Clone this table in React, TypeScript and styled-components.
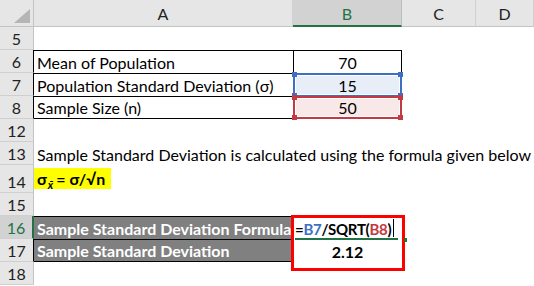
import React from 'react';
import styled, { createGlobalStyle, css } from 'styled-components';

const Global = createGlobalStyle`
  html, body { margin: 0; padding: 0; background: #fff; }
  body { font-family: Lato, "Open Sans", sans-serif; }
`;

const GREEN = '#217346';
const HEAD_BG = '#e6e6e6';
const HEAD_LINE = '#c4c4c4';

const Sheet = styled.div`
  position: relative;
  display: grid;
  grid-template-columns: 34px 259px 109px 74px 58px;
  grid-template-rows: 27px repeat(6, 23px) 28px repeat(4, 23px);
  width: 534px;
  height: 286px;
  overflow: hidden;
  font-family: Lato, "Open Sans", sans-serif;
  font-size: 16px;
  color: #000;
  background: #fff;
`;

const Corner = styled.div`
  background: ${HEAD_BG};
  border-right: 1px solid ${HEAD_LINE};
  border-bottom: 1px solid ${HEAD_LINE};
  display: flex;
  align-items: flex-end;
  justify-content: flex-end;
  padding: 0 3px 3px 0;
`;

const ColHeader = styled.div<{ $active?: boolean }>`
  background: ${(p) => (p.$active ? '#d2d2d2' : HEAD_BG)};
  color: ${(p) => (p.$active ? GREEN : '#222')};
  border-right: 1px solid ${(p) => (p.$active ? '#bcbcbc' : '#d0d0d0')};
  border-bottom: ${(p) => (p.$active ? `2px solid ${GREEN}` : `1px solid ${HEAD_LINE}`)};
  display: flex;
  align-items: center;
  justify-content: center;
  padding-top: 1px;
`;

const RowHeader = styled.div<{ $dark?: boolean; $active?: boolean }>`
  background: ${(p) => (p.$active ? '#d2d2d2' : HEAD_BG)};
  color: ${(p) => (p.$active ? GREEN : '#222')};
  border-bottom: 1px solid #cfcfcf;
  border-right: ${(p) =>
    p.$active ? `2px solid ${GREEN}` : p.$dark ? '1px solid #000' : `1px solid ${HEAD_LINE}`};
  display: flex;
  align-items: flex-end;
  justify-content: center;
  padding-bottom: 1px;
`;

type CellProps = {
  $align?: 'left' | 'center';
  $bold?: boolean;
  $fill?: string;
  $color?: string;
  $bt?: boolean;
  $bb?: boolean;
  $bl?: boolean;
  $br?: boolean;
  $tight?: boolean;
};

const Cell = styled.div<CellProps>`
  position: relative;
  display: flex;
  align-items: flex-end;
  justify-content: ${(p) => (p.$align === 'center' ? 'center' : 'flex-start')};
  padding: 0 3px 1px 3px;
  white-space: nowrap;
  overflow: visible;
  background: ${(p) => p.$fill ?? 'transparent'};
  color: ${(p) => p.$color ?? '#000'};
  font-weight: ${(p) => (p.$bold ? 700 : 400)};
  ${(p) => p.$tight && css`font-size: 15px; letter-spacing: -0.3px; padding-left: 2px;`}
  ${(p) => p.$bt && css`border-top: 1px solid #000;`}
  ${(p) => p.$bb && css`border-bottom: 1px solid #000;`}
  ${(p) => p.$bl && css`border-left: 1px solid #000;`}
  ${(p) => p.$br && css`border-right: 1px solid #000;`}
`;

const RefRange = styled.div<{ $color: string }>`
  position: absolute;
  inset: -1px -1px -1px -1px;
  border: 2px solid ${(p) => p.$color};
  box-shadow: inset 0 0 0 1px #fff;
  pointer-events: none;
`;

const Handle = styled.span<{ $color: string; $v: 'top' | 'bottom'; $h: 'left' | 'right' }>`
  position: absolute;
  width: 5px;
  height: 5px;
  background: ${(p) => p.$color};
  ${(p) => (p.$v === 'top' ? 'top: -3px;' : 'bottom: -3px;')}
  ${(p) => (p.$h === 'left' ? 'left: -3px;' : 'right: -3px;')}
`;

const Highlight = styled.span`
  display: inline-flex;
  align-items: flex-end;
  background: #ffff00;
  height: 20px;
  margin-left: -3px;
  padding: 0 6px 1px 3px;
  font-weight: 700;
  margin-bottom: 3px;
`;

const Sub = styled.span`
  font-style: italic;
  font-size: 11px;
  position: relative;
  top: 3px;
  margin: 0 3px 0 1px;
`;

const Ref = styled.span<{ $color: string }>`
  color: ${(p) => p.$color};
`;

const Caret = styled.span`
  display: inline-block;
  width: 1px;
  height: 18px;
  background: #000;
  margin-left: 2px;
  align-self: flex-end;
  margin-bottom: 1px;
`;

const EditLine = styled.span`
  position: absolute;
  left: 2px;
  right: 4px;
  bottom: -1px;
  height: 2px;
  background: ${GREEN};
`;

const FillHandle = styled.span`
  position: absolute;
  right: -5px;
  bottom: -3px;
  width: 3px;
  height: 4px;
  background: ${GREEN};
  z-index: 3;
`;

const RedBox = styled.span`
  position: absolute;
  left: -2px;
  right: -3px;
  top: -1px;
  height: 50px;
  border: 3px solid #ff0000;
  pointer-events: none;
  z-index: 2;
`;

const BLUE = '#3d6fc4';
const RED = '#c43a43';

function Range({ color }: { color: string }) {
  return (
    <RefRange $color={color}>
      <Handle $color={color} $v="top" $h="left" />
      <Handle $color={color} $v="top" $h="right" />
      <Handle $color={color} $v="bottom" $h="left" />
      <Handle $color={color} $v="bottom" $h="right" />
    </RefRange>
  );
}

function EmptyCells({ n }: { n: number }) {
  return (
    <>
      {Array.from({ length: n }, (_, i) => (
        <Cell key={i} />
      ))}
    </>
  );
}

export default function App() {
  return (
    <>
      <Global />
      <Sheet>
        <Corner>
          <svg width="16" height="14" viewBox="0 0 16 14">
            <polygon points="16,0 16,14 0,14" fill="#b5b5b5" />
          </svg>
        </Corner>
        <ColHeader>A</ColHeader>
        <ColHeader $active>B</ColHeader>
        <ColHeader>C</ColHeader>
        <ColHeader>D</ColHeader>

        <RowHeader>5</RowHeader>
        <EmptyCells n={4} />

        <RowHeader $dark>6</RowHeader>
        <Cell $bt>Mean of Population</Cell>
        <Cell $bt $bl $br $align="center">70</Cell>
        <EmptyCells n={2} />

        <RowHeader $dark>7</RowHeader>
        <Cell $bt>Population Standard Deviation (σ)</Cell>
        <Cell $bt $bl $br $align="center" $fill="#e8eef8">
          15
          <Range color={BLUE} />
        </Cell>
        <EmptyCells n={2} />

        <RowHeader $dark>8</RowHeader>
        <Cell $bt $bb>Sample Size (n)</Cell>
        <Cell $bt $bb $bl $br $align="center" $fill="#f9e8e8">
          50
          <Range color={RED} />
        </Cell>
        <EmptyCells n={2} />

        <RowHeader>12</RowHeader>
        <EmptyCells n={4} />

        <RowHeader>13</RowHeader>
        <Cell>Sample Standard Deviation is calculated using the formula given below</Cell>
        <EmptyCells n={3} />

        <RowHeader>14</RowHeader>
        <Cell>
          <Highlight>
            σ<Sub>x̄</Sub>= σ/√n
          </Highlight>
        </Cell>
        <EmptyCells n={3} />

        <RowHeader>15</RowHeader>
        <EmptyCells n={4} />

        <RowHeader $active>16</RowHeader>
        <Cell $bt $bold $fill="#808080" $color="#fff">Sample Standard Deviation Formula</Cell>
        <Cell $bold $tight>
          =<Ref $color={BLUE}>B7</Ref>/SQRT(<Ref $color={RED}>B8</Ref>)
          <Caret />
          <EditLine />
          <FillHandle />
          <RedBox />
        </Cell>
        <EmptyCells n={2} />

        <RowHeader $dark>17</RowHeader>
        <Cell $bt $bb $bold $fill="#808080" $color="#fff">Sample Standard Deviation</Cell>
        <Cell $bold $align="center">2.12</Cell>
        <EmptyCells n={2} />

        <RowHeader>18</RowHeader>
        <EmptyCells n={4} />
      </Sheet>
    </>
  );
}
